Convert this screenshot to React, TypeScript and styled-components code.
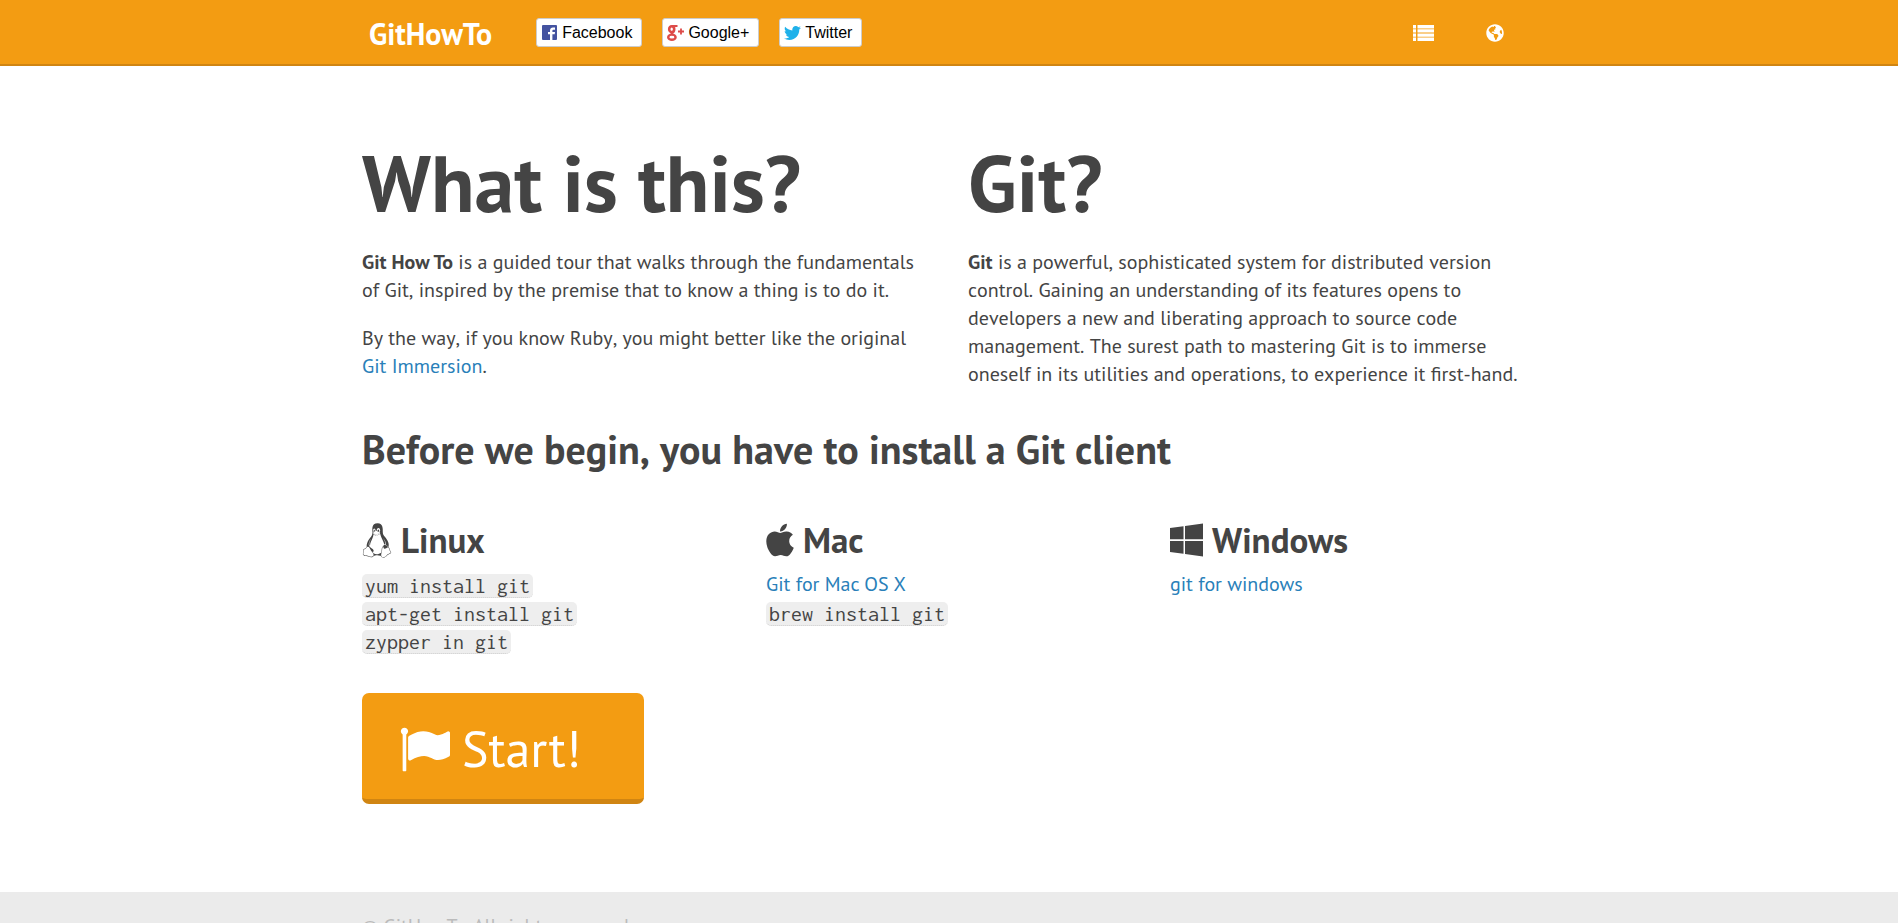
import React from "react";
import styled, { createGlobalStyle } from "styled-components";
import { FaApple, FaGlobeAmericas, FaLinux, FaTwitter, FaWindows } from "react-icons/fa";

const orange = "#f39c12";
const orangeDark = "#d08512";
const ink = "#444";
const blue = "#2980b9";

const GlobalStyle = createGlobalStyle`
  * { box-sizing: border-box; }
  body {
    margin: 0;
    background: #fff;
    color: ${ink};
    font: 20px/28px "PT Sans", Lato, sans-serif;
  }
`;

const Link = styled.a`
  color: ${blue};
  text-decoration: none;
  white-space: nowrap;
  &:hover { text-decoration: underline; }
`;

const Container = styled.div`
  width: 100%;
  max-width: 1212px;
  margin: 0 auto;
  padding: 0 19px;
`;

const Header = styled.header`
  background: ${orange};
  border-bottom: 2px solid ${orangeDark};
`;

const Bar = styled(Container)`
  display: flex;
  align-items: flex-start;
  min-height: 64px;
`;

const Brand = styled.a`
  padding: 4px 7px 0;
  color: #fff;
  font-size: 30px;
  font-weight: 700;
  line-height: 60px;
  text-decoration: none;
`;

const ShareList = styled.div`
  display: flex;
  gap: 20px;
  margin: 18px 0 0 37px;
`;

const ShareButton = styled.button`
  display: flex;
  align-items: center;
  gap: 4px;
  height: 29px;
  padding: 0 9px 0 4px;
  border: 1px solid #ccc;
  border-radius: 3px;
  background: #fff;
  color: #000;
  font: 16px "Liberation Sans", Arial, sans-serif;
  cursor: pointer;
`;

const ShareIcon = styled.span<{ $color: string }>`
  display: flex;
  align-items: center;
  justify-content: center;
  width: 17px;
  color: ${(p) => p.$color};
`;

const Tools = styled.nav`
  display: flex;
  align-items: center;
  gap: 32px;
  height: 64px;
  margin-left: auto;
  padding: 2px 21px 0 0;
`;

const ToolButton = styled.button`
  display: flex;
  align-items: center;
  justify-content: center;
  width: 40px;
  height: 40px;
  padding: 0;
  border: 0;
  background: none;
  color: #fff;
  cursor: pointer;
`;

const Main = styled(Container).attrs({ as: "main" })`
  padding-top: 73px;
  padding-bottom: 88px;
`;

const Intro = styled.div`
  display: grid;
  grid-template-columns: repeat(2, 1fr);
  gap: 38px;
`;

const Title = styled.h1`
  margin: 0 0 21px;
  font-size: 80px;
  line-height: 88px;
`;

const Paragraph = styled.p`
  margin: 0 0 20px;
  font-kerning: none;
  &:last-child { margin-bottom: 0; }
`;

const Name = styled.strong`
  font-kerning: normal;
`;

const Subtitle = styled.h2`
  margin: 39px 0 49px;
  font-size: 40px;
  line-height: 44px;
  font-kerning: none;
`;

const Systems = styled.div`
  display: grid;
  grid-template-columns: repeat(3, 1fr);
  gap: 38px;
`;

const SystemName = styled.h3<{ $iconWidth: number; $iconHeight: number }>`
  display: flex;
  align-items: center;
  gap: 9px;
  margin: 0 0 10px;
  font-size: 35px;
  line-height: 40px;

  svg {
    width: ${(p) => p.$iconWidth}px;
    height: ${(p) => p.$iconHeight}px;
  }
`;

const Commands = styled.ul`
  margin: 0;
  padding: 0;
  list-style: none;
`;

const Code = styled.code`
  display: inline-block;
  padding: 0 3px;
  border-bottom: 1px dotted #ccc;
  border-radius: 5px;
  background: #eee;
  font: 22px/23px Inconsolata, Consolas, "Liberation Mono", monospace;
  vertical-align: middle;
`;

const Start = styled.a`
  display: inline-flex;
  align-items: center;
  gap: 12px;
  margin-top: 39px;
  padding: 26px 63px 20px 37px;
  border-bottom: 5px solid ${orangeDark};
  border-radius: 7px;
  background: ${orange};
  color: #fff;
  font-size: 50px;
  line-height: 60px;
  text-decoration: none;
  vertical-align: top;
`;

const Footer = styled.footer`
  padding: 20px 0;
  background: #ebebeb;
  color: #bbb;
`;

const FacebookIcon = () => (
  <svg width="15" height="15" viewBox="0 0 15 15" aria-hidden="true">
    <rect width="15" height="15" rx="1" fill="currentColor" />
    <path d="M8 15V9.200H6V7h2V5.500C8 3.600 9.200 2.500 11 2.500h2v2.200h-1.500c-.8 0-1.100.4-1.100 1.100V7H13l-.3 2.200h-2.300V15z" fill="#fff" />
  </svg>
);

const GooglePlusIcon = () => (
  <svg width="17" height="16" viewBox="0 0 17 16" fill="none" stroke="currentColor" aria-hidden="true">
    <ellipse cx="4.700" cy="4.200" rx="2.500" ry="2.900" strokeWidth="2.600" />
    <path d="M5 1.100h5.500M5.500 7c-1.500 1 -1 1.600.6 2.600" strokeWidth="2" />
    <ellipse cx="4.900" cy="12.200" rx="3.700" ry="2.600" strokeWidth="2.400" />
    <path d="M11 6.500h6M14 3.500v6" strokeWidth="1.800" />
  </svg>
);

const ListIcon = () => (
  <svg width="21" height="16" viewBox="0 0 21 16" fill="currentColor" aria-hidden="true">
    {[0, 4.2, 8.4, 12.6].map((y) => (
      <path key={y} d={`M0 ${y}h3v3.400H0zM4.500 ${y}H21v3.400H4.500z`} />
    ))}
  </svg>
);

const FlagIcon = () => (
  <svg width="51" height="51" viewBox="0 0 1792 1792" fill="currentColor" aria-hidden="true">
    <path d="M320 256q0 72-64 110v1266q0 13-9.500 22.500t-22.500 9.500h-64q-13 0-22.500-9.500t-9.500-22.500v-1266q-64-38-64-110 0-53 37.500-90.500t90.500-37.500 90.500 37.500 37.500 90.500zm1472 64v763q0 25-12.500 38.500t-39.500 27.500q-215 116-369 116-61 0-123.500-22t-108.500-48-115.500-48-142.500-22q-192 0-464 146-17 9-33 9-26 0-45-19t-19-45v-742q0-32 31-55 21-14 79-43 236-120 421-120 107 0 200 29t219 88q38 19 88 19 54 0 117.500-21t110-47 88-47 54.500-21q26 0 45 19t19 45z" />
  </svg>
);

export default function App() {
  return (
    <>
      <GlobalStyle />
      <Header>
        <Bar>
          <Brand href="#">GitHowTo</Brand>
          <ShareList>
            <ShareButton type="button">
              <ShareIcon $color="#4453a0"><FacebookIcon /></ShareIcon>
              Facebook
            </ShareButton>
            <ShareButton type="button">
              <ShareIcon $color="#dd4b49"><GooglePlusIcon /></ShareIcon>
              Google+
            </ShareButton>
            <ShareButton type="button">
              <ShareIcon $color="#1fb1ea"><FaTwitter size={18} /></ShareIcon>
              Twitter
            </ShareButton>
          </ShareList>
          <Tools>
            <ToolButton type="button" aria-label="Contents"><ListIcon /></ToolButton>
            <ToolButton type="button" aria-label="Language"><FaGlobeAmericas size={18} /></ToolButton>
          </Tools>
        </Bar>
      </Header>

      <Main>
        <Intro>
          <section>
            <Title>What is this?</Title>
            <Paragraph>
              <Name>Git How To</Name> is a guided tour that walks through the fundamentals of Git,
              inspired by the premise that to know a thing is to do it.
            </Paragraph>
            <Paragraph>
              By the way, if you know Ruby, you might better like the original{" "}
              <Link href="#">Git Immersion</Link>.
            </Paragraph>
          </section>
          <section>
            <Title>Git?</Title>
            <Paragraph>
              <Name>Git</Name> is a powerful, sophisticated system for distributed version control.
              Gaining an understanding of its features opens to developers a new and liberating approach
              to source code management. The surest path to mastering Git is to immerse oneself in its
              utilities and operations, to experience it first-hand.
            </Paragraph>
          </section>
        </Intro>

        <Subtitle>Before we begin, you have to install a Git client</Subtitle>

        <Systems>
          <section>
            <SystemName $iconWidth={30} $iconHeight={35}><FaLinux aria-hidden="true" />Linux</SystemName>
            <Commands>
              <li><Code>yum install git</Code></li>
              <li><Code>apt-get install git</Code></li>
              <li><Code>zypper in git</Code></li>
            </Commands>
          </section>
          <section>
            <SystemName $iconWidth={28} $iconHeight={38}><FaApple aria-hidden="true" />Mac</SystemName>
            <Commands>
              <li><Link href="#">Git for Mac OS X</Link></li>
              <li><Code>brew install git</Code></li>
            </Commands>
          </section>
          <section>
            <SystemName $iconWidth={33} $iconHeight={38}><FaWindows aria-hidden="true" />Windows</SystemName>
            <Commands>
              <li><Link href="#">git for windows</Link></li>
            </Commands>
          </section>
        </Systems>

        <Start href="#"><FlagIcon />Start!</Start>
      </Main>

      <Footer>
        <Container>© GitHowTo. All rights reserved.</Container>
      </Footer>
    </>
  );
}
